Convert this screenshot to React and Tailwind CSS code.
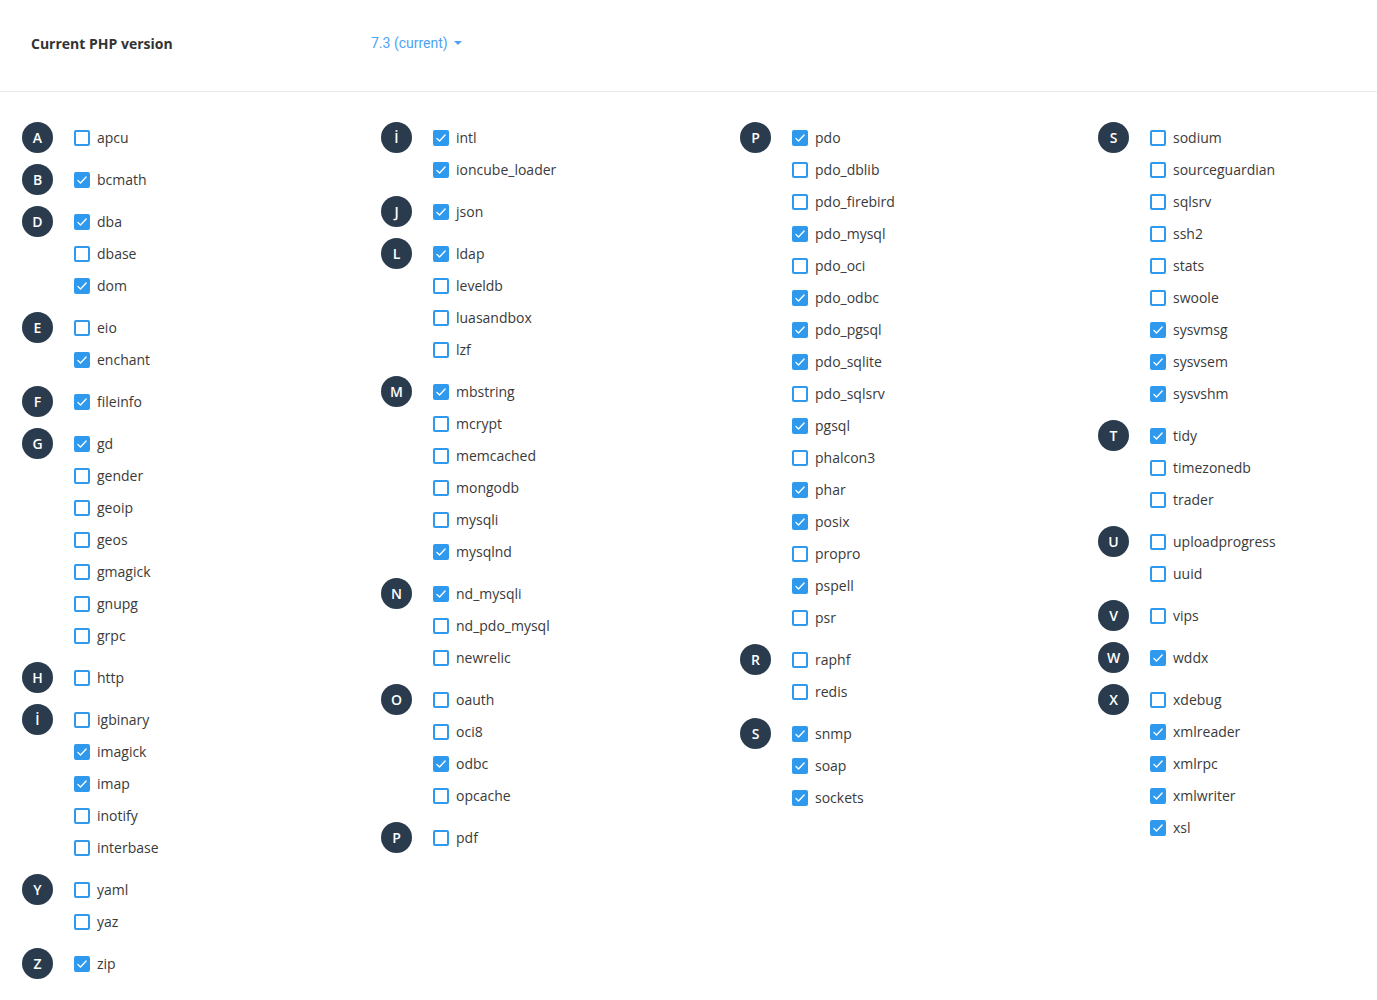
import React from "react";

const columns = [
  [
    ["A", [["apcu", 0]]],
    ["B", [["bcmath", 1]]],
    ["D", [["dba", 1], ["dbase", 0], ["dom", 1]]],
    ["E", [["eio", 0], ["enchant", 1]]],
    ["F", [["fileinfo", 1]]],
    ["G", [["gd", 1], ["gender", 0], ["geoip", 0], ["geos", 0], ["gmagick", 0], ["gnupg", 0], ["grpc", 0]]],
    ["H", [["http", 0]]],
    ["İ", [["igbinary", 0], ["imagick", 1], ["imap", 1], ["inotify", 0], ["interbase", 0]]],
    ["Y", [["yaml", 0], ["yaz", 0]]],
    ["Z", [["zip", 1]]],
  ],
  [
    ["İ", [["intl", 1], ["ioncube_loader", 1]]],
    ["J", [["json", 1]]],
    ["L", [["ldap", 1], ["leveldb", 0], ["luasandbox", 0], ["lzf", 0]]],
    ["M", [["mbstring", 1], ["mcrypt", 0], ["memcached", 0], ["mongodb", 0], ["mysqli", 0], ["mysqlnd", 1]]],
    ["N", [["nd_mysqli", 1], ["nd_pdo_mysql", 0], ["newrelic", 0]]],
    ["O", [["oauth", 0], ["oci8", 0], ["odbc", 1], ["opcache", 0]]],
    ["P", [["pdf", 0]]],
  ],
  [
    ["P", [
      ["pdo", 1], ["pdo_dblib", 0], ["pdo_firebird", 0], ["pdo_mysql", 1], ["pdo_oci", 0], ["pdo_odbc", 1],
      ["pdo_pgsql", 1], ["pdo_sqlite", 1], ["pdo_sqlsrv", 0], ["pgsql", 1], ["phalcon3", 0], ["phar", 1],
      ["posix", 1], ["propro", 0], ["pspell", 1], ["psr", 0],
    ]],
    ["R", [["raphf", 0], ["redis", 0]]],
    ["S", [["snmp", 1], ["soap", 1], ["sockets", 1]]],
  ],
  [
    ["S", [
      ["sodium", 0], ["sourceguardian", 0], ["sqlsrv", 0], ["ssh2", 0], ["stats", 0], ["swoole", 0],
      ["sysvmsg", 1], ["sysvsem", 1], ["sysvshm", 1],
    ]],
    ["T", [["tidy", 1], ["timezonedb", 0], ["trader", 0]]],
    ["U", [["uploadprogress", 0], ["uuid", 0]]],
    ["V", [["vips", 0]]],
    ["W", [["wddx", 1]]],
    ["X", [["xdebug", 0], ["xmlreader", 1], ["xmlrpc", 1], ["xmlwriter", 1], ["xsl", 1]]],
  ],
];

const Checkbox = ({ checked }) =>
  checked ? (
    <span className="flex h-4 w-4 shrink-0 translate-y-[1px] items-center justify-center rounded-[2px] bg-[#2f99ee]">
      <svg viewBox="0 0 16 16" className="h-3 w-3" fill="none" stroke="white" strokeWidth="1.8" strokeLinecap="round" strokeLinejoin="round">
        <path d="M2.5 8.5 L6 12 L13.5 4" />
      </svg>
    </span>
  ) : (
    <span className="h-4 w-4 shrink-0 translate-y-[1px] rounded-[2px] border-2 border-[#2f99ee] bg-white" />
  );

const Group = ({ letter, items }) => (
  <div className="mb-[10px] flex">
    <div className="flex h-8 w-[52px] shrink-0 items-center">
      <span className="flex h-[31px] w-[31px] items-center justify-center rounded-full bg-[#293b4d] text-[14px] font-semibold text-white">
        {letter}
      </span>
    </div>
    <ul className="flex flex-col">
      {items.map(([name, on]) => (
        <li key={name} className="flex h-8 items-center gap-[7px]">
          <Checkbox checked={on} />
          <span className="text-[14px] text-[#3a3a3a]">{name}</span>
        </li>
      ))}
    </ul>
  </div>
);

export default function App() {
  return (
    <div className="min-h-screen bg-white font-['Open_Sans',sans-serif]">
      <div className="flex h-[92px] items-center border-b border-[#e8e8e8] pb-[5px] pl-[31px]">
        <div className="w-[340px] text-[14px] font-bold text-[#333]">Current PHP version</div>
        <button className="flex items-center gap-[6px] font-['Roboto',sans-serif] text-[14px] text-[#4da3f5]">
          7.3 (current)
          <svg width="8" height="4" viewBox="0 0 8 4">
            <path d="M0 0 L8 0 L4 4 Z" fill="#4da3f5" />
          </svg>
        </button>
      </div>
      <div className="grid grid-cols-[359px_359px_358px_1fr] pl-[22px] pt-[29px]">
        {columns.map((col, i) => (
          <div key={i}>
            {col.map(([letter, items]) => (
              <Group key={letter + i} letter={letter} items={items} />
            ))}
          </div>
        ))}
      </div>
    </div>
  );
}
